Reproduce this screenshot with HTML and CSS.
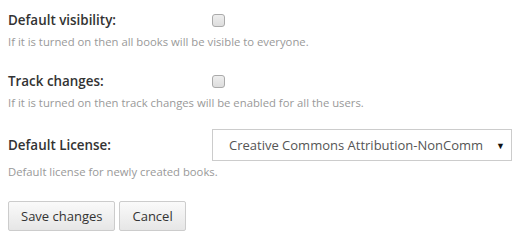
FILE: index.html
```html
<!DOCTYPE html>
<html lang="en">

<head>
    <meta charset="UTF-8">
    <meta name="viewport" content="width=device-width, initial-scale=1.0">
    <title>Settings</title>
    <link rel="stylesheet" href="styles.css">
</head>

<body>
    <form class="settings">
        <div class="field">
            <div class="row">
                <label class="label" for="visibility">Default visibility:</label>
                <span class="check"><input type="checkbox" id="visibility"></span>
            </div>
            <p class="help">If it is turned on then all books will be visible to everyone.</p>
        </div>
        <div class="field">
            <div class="row">
                <label class="label" for="track">Track changes:</label>
                <span class="check"><input type="checkbox" id="track"></span>
            </div>
            <p class="help">If it is turned on then track changes will be enabled for all the users.</p>
        </div>
        <div class="field">
            <div class="row row-select">
                <label class="label" for="license">Default License:</label>
                <div class="select">
                    <span class="select-text">Creative Commons Attribution-NonCommercial</span>
                    <span class="arrow">&#9660;</span>
                </div>
            </div>
            <p class="help">Default license for newly created books.</p>
        </div>
        <div class="buttons">
            <button type="button" class="btn">Save changes</button>
            <button type="button" class="btn">Cancel</button>
        </div>
    </form>
</body>

</html>
```

FILE: styles.css
```css
body {
    margin: 0;
    padding: 7px 8px 0;
    font-family: "Open Sans", sans-serif;
    color: #333;
    background: #fff;
}

.settings {
    width: 504px;
}

.field {
    margin-bottom: 19px;
}

.row {
    display: flex;
    align-items: center;
    height: 26px;
}

.row-select {
    height: 32px;
    margin: 2px 0 3px;
}

.label {
    width: 204px;
    font-size: 13.4px;
    font-weight: 600;
}

.check {
    display: flex;
}

.check input {
    appearance: none;
    width: 13px;
    height: 13px;
    margin: 1px 0 0;
    border: 1px solid #aaa;
    border-radius: 3px;
    background: linear-gradient(#eee, #ddd);
}

.help {
    margin: 1px 0 0;
    font-size: 11.3px;
    line-height: 15px;
    color: #999;
}

.select {
    display: flex;
    align-items: center;
    width: 300px;
    height: 32px;
    box-sizing: border-box;
    border: 1px solid #ccc;
    padding: 0 6px 0 16px;
    font-size: 13px;
    color: #555;
}

.select-text {
    flex: 1;
    overflow: hidden;
    white-space: nowrap;
}

.arrow {
    font-size: 9px;
    color: #111;
    margin-left: 13px;
}

.buttons {
    display: flex;
    gap: 4px;
    margin-top: 22px;
}

.btn {
    height: 30px;
    padding: 0 12px;
    font-family: "Open Sans", sans-serif;
    font-size: 13px;
    color: #333;
    border: 1px solid #ccc;
    border-radius: 2px;
    background: linear-gradient(#fafafa, #e6e6e6);
}
```
